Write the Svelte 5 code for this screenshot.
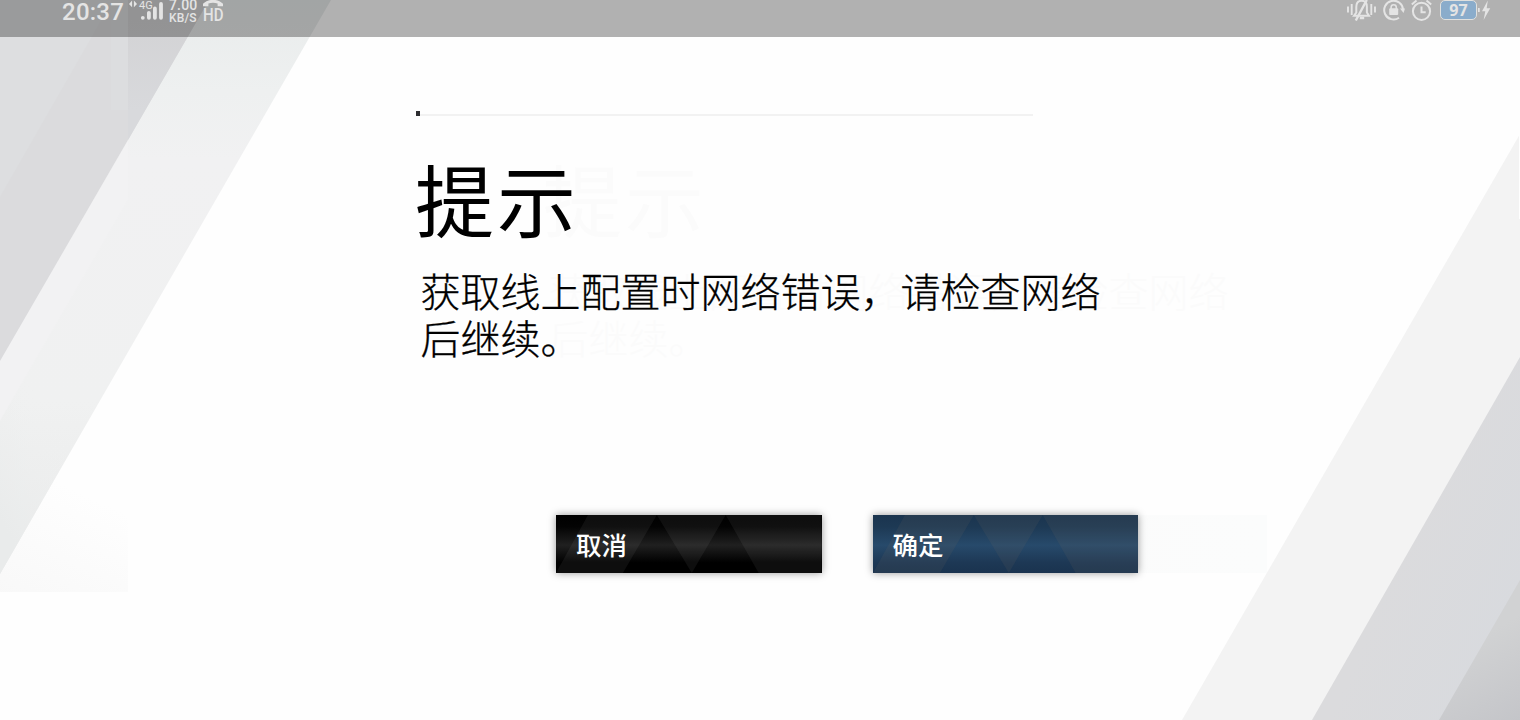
<script lang="ts">
  // Network error dialog shown on top of the launch screen, with the
  // phone's status bar overlaid at the top edge.

  interface Action {
    id: string;
    label: string;
  }

  interface Props {
    onAction?: (id: string) => void;
  }

  let { onAction }: Props = $props();

  const time = '20:37';
  const battery = 97;
  const title = '提示';
  const lines = ['获取线上配置时网络错误，请检查网络', '后继续。'];
  const actions: Action[] = [
    { id: 'cancel', label: '取消' },
    { id: 'confirm', label: '确定' },
  ];
</script>

<div class="screen">
  <svg class="backdrop" viewBox="0 0 1520 720" aria-hidden="true">
    <defs>
      <linearGradient id="pale" gradientUnits="userSpaceOnUse" x1="0" y1="0" x2="0" y2="573">
        <stop offset="0" stop-color="#e9ecec" />
        <stop offset="0.16" stop-color="#eef0f0" />
        <stop offset="0.28" stop-color="#f1f1f2" />
        <stop offset="0.7" stop-color="#f0f1f1" />
        <stop offset="1" stop-color="#e9eaea" />
      </linearGradient>
      <linearGradient id="fold" gradientUnits="userSpaceOnUse" x1="128" y1="20" x2="128" y2="110">
        <stop offset="0" stop-color="#d3d3d5" />
        <stop offset="1" stop-color="#d8d9dc" />
      </linearGradient>
      <linearGradient id="left-mist" gradientUnits="userSpaceOnUse" x1="0" y1="520" x2="85" y2="470">
        <stop offset="0" stop-color="#e9ebeb" />
        <stop offset="1" stop-color="#f0f1f1" stop-opacity="0" />
      </linearGradient>
      <linearGradient id="corner" gradientUnits="userSpaceOnUse" x1="20" y1="610" x2="75" y2="490">
        <stop offset="0" stop-color="#f8f8f8" />
        <stop offset="1" stop-color="#fefefe" />
      </linearGradient>
      <linearGradient id="right-mid" gradientUnits="userSpaceOnUse" x1="1400" y1="550" x2="1520" y2="600">
        <stop offset="0" stop-color="#dbdbdd" />
        <stop offset="1" stop-color="#d8dade" />
      </linearGradient>
      <linearGradient id="right-deep" gradientUnits="userSpaceOnUse" x1="1475" y1="640" x2="1520" y2="720">
        <stop offset="0" stop-color="#d1d2d3" />
        <stop offset="1" stop-color="#c4c5c9" />
      </linearGradient>
    </defs>
    <rect y="430" width="128" height="162" fill="url(#corner)" />
    <path d="M0 0H331L0 574Z" fill="url(#pale)" />
    <path d="M128 140L0 360V421L128 200Z" fill="#f2f2f3" />
    <path d="M0 421L80 283V435L0 574Z" fill="url(#left-mist)" />
    <path d="M0 0H209L0 361Z" fill="#dbdbdd" />
    <path d="M0 0H113L0 197Z" fill="#dddee0" />
    <path d="M111 0H128V110H111Z" fill="#dcdddf" />
    <path d="M128 0H209L128 140Z" fill="url(#fold)" />
    <path d="M1520 134V720H1182Z" fill="#f3f3f3" />
    <path d="M1520 357V720H1312Z" fill="url(#right-mid)" />
    <path d="M1520 580V720H1439Z" fill="url(#right-deep)" />
    <rect x="1519" y="134" width="1" height="85" fill="#fefefe" />
  </svg>

  <header class="status-bar">
    <span class="time">{time}</span>
    <svg class="signal" viewBox="0 0 36 22">
      <path d="M0 4L3.1 0.5V7.2ZM8 4L4.9 0.5V7.2Z" fill="currentColor" />
      <text x="10" y="9">4G</text>
      <g stroke="currentColor" stroke-width="3.8" stroke-linecap="round">
        <path d="M13.8 17.8v0M19.9 12.8v5M25.9 8.5v9.3M32 4v13.8" />
      </g>
    </svg>
    <span class="speed"><span>7.00</span><small>KB/S</small></span>
    <span class="volte">
      <svg viewBox="0 0 20 7"><path d="M0 6.2V3.8C5-1.5 15-1.5 20 3.8V6.2H14.6V3.5Q10 1.9 5.4 3.5V6.2Z" fill="currentColor" /></svg>
      <span>HD</span>
    </span>

    <span class="spacer"></span>

    <svg class="vibrate" viewBox="0 0 30 22" fill="none" stroke="currentColor" stroke-width="2">
      <path d="M1 6.5v6M4.7 4v11M24.3 4v11M28 6.5v6" stroke-width="1.9" />
      <path d="M7 15.8H22L19.9 12.5V7C19.9 2.7 18 0.8 14.6 0.8S9.3 2.7 9.3 7V12.5Z" />
      <path d="M12.8 18h4.4M19.8 0L8.8 20.5" stroke-width="2.4" />
    </svg>
    <svg class="rotate-lock" viewBox="0 0 22 22" fill="none" stroke="currentColor" stroke-width="2">
      <path d="M16 17.8A9.4 9.4 0 1 1 20 9.5" />
      <path d="M17 8.5h5l-1.5 4.5Z" fill="currentColor" stroke="none" />
      <rect x="6.2" y="8.2" width="9" height="6.8" rx="1" fill="currentColor" stroke="none" />
      <path d="M8.1 9V7.3a2.6 2.6 0 0 1 5.2 0V9" stroke-width="1.6" />
    </svg>
    <svg class="alarm" viewBox="0 0 22 22" fill="none" stroke="currentColor" stroke-width="2">
      <circle cx="10.5" cy="11.3" r="8.6" />
      <path d="M10.5 6.6V12.3H14.7M0.8 4.5L5.5 0.5M20.2 4.5L15.5 0.5" />
    </svg>
    <span class="battery">{battery}</span>
    <svg class="bolt" viewBox="0 0 13 20" fill="currentColor">
      <path d="M0 8h1.7v4H0ZM9.8 0.5L4 11.3H7.3L5.6 20L12.2 8.3H8.7Z" />
    </svg>
  </header>

  <main class="dialog">
    <div class="rule"><i></i></div>
    <h1>{title}</h1>
    <p>
      {#each lines as line}
        <span>{line}</span>
      {/each}
    </p>
    <div class="actions">
      {#each actions as action (action.id)}
        <button type="button" class={action.id} onclick={() => onAction?.(action.id)}>
          <svg viewBox="0 0 266 58" aria-hidden="true">
            <path d="M32 0H101L67 58H0ZM101 0H170L136 58ZM170 0H266V58H203Z" />
          </svg>
          <span>{action.label}</span>
        </button>
      {/each}
    </div>
  </main>
</div>

<style>
  :global(body) {
    margin: 0;
    background: #fefefe;
  }
  .screen {
    position: relative;
    width: 1520px;
    height: 720px;
    overflow: hidden;
    background: #fefefe;
    font-family: 'Noto Sans CJK SC', sans-serif;
  }
  .backdrop {
    position: absolute;
    inset: 0;
    width: 1520px;
    height: 720px;
  }

  .status-bar {
    position: relative;
    display: flex;
    align-items: flex-start;
    box-sizing: border-box;
    height: 37px;
    padding: 0 29px 0 62px;
    background: rgba(0, 0, 0, 0.3);
    color: #e4e4e4;
    font-family: Roboto, sans-serif;
  }
  .status-bar svg {
    display: block;
    flex: none;
  }
  .time {
    width: 67px;
    font-size: 24px;
    font-weight: 500;
    line-height: 24px;
    letter-spacing: 0.25px;
  }
  .signal {
    width: 36px;
    height: 22px;
  }
  .signal text {
    fill: currentColor;
    font-size: 11px;
  }
  .speed {
    display: flex;
    flex-direction: column;
    width: 34px;
    margin-left: 4px;
    font-size: 14px;
    font-weight: 500;
    line-height: 11px;
    letter-spacing: 0.15px;
  }
  .speed small {
    font-size: 12px;
    line-height: 14px;
  }
  .volte {
    width: 22px;
    font-size: 19px;
    font-weight: 500;
    line-height: 17px;
  }
  .volte svg {
    width: 20px;
    height: 7px;
  }
  .volte span {
    display: block;
    margin-top: -1px;
    transform: scaleX(0.79);
    transform-origin: left;
  }
  .spacer { flex: 1; }
  .vibrate {
    width: 30px;
    height: 22px;
    margin-right: 6px;
  }
  .rotate-lock,
  .alarm {
    width: 22px;
    height: 22px;
    margin-right: 6px;
  }
  .alarm { margin-right: 7px; }
  .battery {
    box-sizing: border-box;
    width: 37px;
    height: 20px;
    margin-right: 1px;
    border: 1.5px solid #e0e0de;
    border-radius: 5px;
    background: #8aaccb;
    font-family: 'Noto Sans', sans-serif;
    font-size: 16px;
    font-weight: 700;
    line-height: 19px;
    text-align: center;
  }
  .bolt {
    width: 13px;
    height: 20px;
  }

  .dialog {
    position: relative;
    padding: 74px 0 0 416px;
  }
  .rule {
    display: flex;
    width: 617px;
    height: 5px;
    background: linear-gradient(#f2f2f2, #f2f2f2) bottom / 100% 2px no-repeat;
  }
  .rule i {
    width: 4px;
    background: #2d2d30;
  }
  h1 {
    margin: 34px 0 0 -1px;
    color: #000;
    font-size: 79px;
    font-weight: 400;
    line-height: 96px;
    letter-spacing: 3px;
    text-shadow: 128px 0 #fbfbfb;
  }
  p {
    margin: 21px 0 0 4.5px;
    color: #000;
    font-size: 40px;
    font-weight: 300;
    line-height: 47px;
    text-shadow: 128px 0 #fbfbfb;
    -webkit-text-stroke: 0.3px #000;
  }
  p span { display: block; }
  .actions {
    display: flex;
    gap: 51px;
    width: 711px;
    height: 58px;
    margin: 154px 0 0 140px;
    background: linear-gradient(90deg, transparent 50%, #fbfbfb 50%, #fbfcfc);
  }
  button {
    position: relative;
    flex: none;
    width: 265.6px;
    height: 58px;
    padding: 0 0 0 20px;
    border: none;
    box-shadow: 0 0 8px rgba(0, 0, 0, 0.4);
    color: #fff;
    font-family: inherit;
    font-size: 25.5px;
    font-weight: 500;
    line-height: 58px;
    text-align: left;
  }
  button svg {
    position: absolute;
    inset: 0;
    fill: rgba(255, 255, 255, 0.055);
  }
  button span { position: relative; }
  .cancel {
    background: linear-gradient(#000, #030303 20%, #202020 52%, #000 82%, #000);
  }
  .confirm {
    background: linear-gradient(#1b354f, #1d3954 20%, #274a6b 52%, #1d3855 82%, #1a334f);
  }
  .confirm svg { fill: rgba(110, 100, 95, 0.15); }
</style>
